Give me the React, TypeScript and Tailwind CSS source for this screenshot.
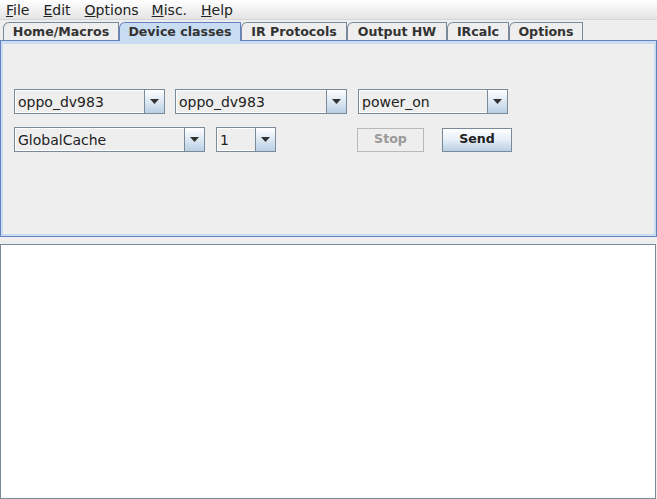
import React from "react";

const F = { fontFamily: '"DejaVu Sans", Verdana, sans-serif' };

function Arrow() {
  return (
    <svg width="9" height="5" viewBox="0 0 9 5">
      <path d="M0 0 L9 0 L4.5 5 Z" fill="#333333" />
    </svg>
  );
}

function Combo({ w, text }: { w: number; text: string }) {
  return (
    <div
      className="flex h-[25px] border border-[#7a8a99] bg-[#eeeeee] box-border"
      style={{ width: w }}
    >
      <div className="flex-1 flex items-center pl-[2px] border border-[#ffffff] border-r-0 text-[14px] text-[#222222] leading-none">
        {text}
      </div>
      <div className="w-[20px] border-l border-[#7a8a99] flex items-center justify-center bg-gradient-to-b from-[#ffffff] via-[#dde8f3] to-[#b8cfe5]">
        <Arrow />
      </div>
    </div>
  );
}

function Tab({ label, w, selected }: { label: string; w: number; selected?: boolean }) {
  return (
    <div
      className={
        "box-border border-t border-r border-l rounded-tl-[6px] flex items-center justify-center pt-[2px] text-[12.6px] font-bold text-[#333333] leading-none " +
        (selected
          ? "h-[19px] -mb-[1px] pb-[1px] relative z-10 bg-[#c8ddf2] border-[#6382bf]"
          : "h-[18px] bg-[#eeeeee] border-[#7a8a99]")
      }
      style={{ width: w }}
    >
      {label}
    </div>
  );
}

export default function App() {
  return (
    <div className="w-[657px] h-[499px] bg-[#eeeeee] flex flex-col overflow-hidden" style={F}>
      {/* Menu bar */}
      <div className="h-[20px] flex items-center pl-[6px] pt-[1px] bg-gradient-to-b from-[#ffffff] to-[#e4e4e4] border-b border-[#d6d6d6] text-[14px] text-[#222222]">
        <span className="mr-[14px]"><u>F</u>ile</span>
        <span className="mr-[14px]"><u>E</u>dit</span>
        <span className="mr-[13px]"><u>O</u>ptions</span>
        <span className="mr-[14px]"><u>M</u>isc.</span>
        <span><u>H</u>elp</span>
      </div>
      {/* Tabs */}
      <div className="flex items-end pl-[3px] pt-[2px]">
        <Tab label="Home/Macros" w={116} />
        <Tab label="Device classes" w={122} selected />
        <Tab label="IR Protocols" w={106} />
        <Tab label="Output HW" w={100} />
        <Tab label="IRcalc" w={62} />
        <Tab label="Options" w={74} />
      </div>
      {/* Content panel */}
      <div className="h-[197px] border border-[#6382bf] box-border">
        <div className="h-full border-t-[3px] border-l-[2px] border-b-[2px] border-r-[2px] border-[#c8ddf2] bg-[#eeeeee] box-border flex flex-col pl-[11px] pt-[45px]">
          <div className="flex items-center">
            <Combo w={151} text="oppo_dv983" />
            <div className="w-[10px]" />
            <Combo w={172} text="oppo_dv983" />
            <div className="w-[11px]" />
            <Combo w={150} text="power_on" />
          </div>
          <div className="flex items-center mt-[13px]">
            <Combo w={191} text="GlobalCache" />
            <div className="w-[11px]" />
            <Combo w={60} text="1" />
            <div className="w-[81px]" />
            <div className="w-[67px] h-[24px] box-border border border-[#b8b8b8] flex items-center justify-center text-[12.6px] font-bold text-[#999999]">
              Stop
            </div>
            <div className="w-[18px]" />
            <div className="w-[70px] h-[24px] box-border border border-[#7a8a99] flex items-center justify-center text-[12.6px] font-bold text-[#222222] bg-gradient-to-b from-[#ffffff] via-[#e6eef7] to-[#b8cfe5]">
              Send
            </div>
          </div>
        </div>
      </div>
      <div className="h-[7px]" />
      {/* Text area */}
      <div className="h-[255px] border border-[#7a8a99] bg-white box-border mr-[1px]" />
    </div>
  );
}
